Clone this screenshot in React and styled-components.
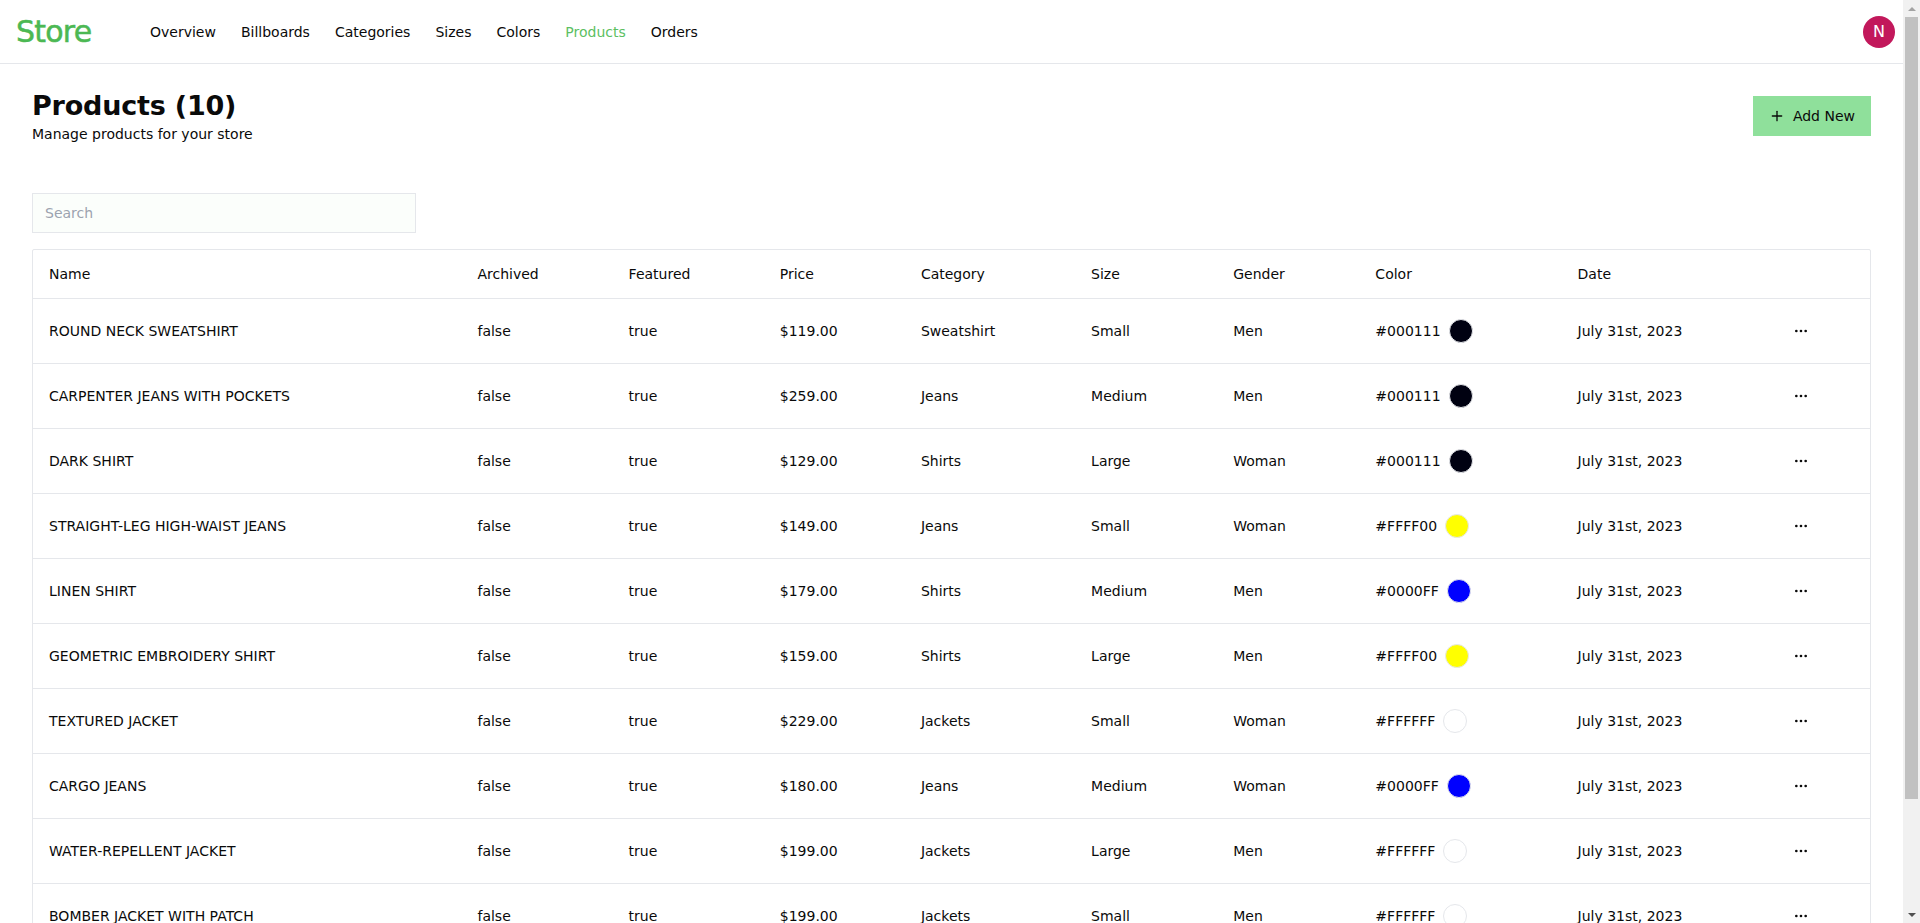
import React, { useEffect, useRef, useState } from "react";
import styled, { createGlobalStyle } from "styled-components";
import { Plus, Ellipsis } from "lucide-react";

const GlobalStyle = createGlobalStyle`
  html, body {
    margin: 0;
    height: 100%;
    overflow: hidden;
  }
  body {
    background: #ffffff;
    color: #0a0a0a;
    font-family: "DejaVu Sans", "Liberation Sans", sans-serif;
  }
  * { box-sizing: border-box; }
`;

const products = [
  { name: "ROUND NECK SWEATSHIRT", price: "$119.00", category: "Sweatshirt", size: "Small", gender: "Men", color: "#000111" },
  { name: "CARPENTER JEANS WITH POCKETS", price: "$259.00", category: "Jeans", size: "Medium", gender: "Men", color: "#000111" },
  { name: "DARK SHIRT", price: "$129.00", category: "Shirts", size: "Large", gender: "Woman", color: "#000111" },
  { name: "STRAIGHT-LEG HIGH-WAIST JEANS", price: "$149.00", category: "Jeans", size: "Small", gender: "Woman", color: "#FFFF00" },
  { name: "LINEN SHIRT", price: "$179.00", category: "Shirts", size: "Medium", gender: "Men", color: "#0000FF" },
  { name: "GEOMETRIC EMBROIDERY SHIRT", price: "$159.00", category: "Shirts", size: "Large", gender: "Men", color: "#FFFF00" },
  { name: "TEXTURED JACKET", price: "$229.00", category: "Jackets", size: "Small", gender: "Woman", color: "#FFFFFF" },
  { name: "CARGO JEANS", price: "$180.00", category: "Jeans", size: "Medium", gender: "Woman", color: "#0000FF" },
  { name: "WATER-REPELLENT JACKET", price: "$199.00", category: "Jackets", size: "Large", gender: "Men", color: "#FFFFFF" },
  { name: "BOMBER JACKET WITH PATCH", price: "$199.00", category: "Jackets", size: "Small", gender: "Men", color: "#FFFFFF" },
];

const links = ["Overview", "Billboards", "Categories", "Sizes", "Colors", "Products", "Orders"];

const columns = [
  { label: "Name", width: 428 },
  { label: "Archived", width: 151 },
  { label: "Featured", width: 151 },
  { label: "Price", width: 141 },
  { label: "Category", width: 170 },
  { label: "Size", width: 142 },
  { label: "Gender", width: 142 },
  { label: "Color", width: 202 },
  { label: "Date", width: 207 },
  { label: "", width: 101 },
];

const Shell = styled.div`
  display: flex;
  height: 100vh;
`;

const Viewport = styled.div`
  flex: 1;
  min-width: 0;
  overflow-y: auto;
  scrollbar-width: none;
  &::-webkit-scrollbar { display: none; }
`;

// drawn scrollbar, the browser's own one is hidden in the capture
const ScrollBar = styled.div`
  width: 17px;
  background: #f1f1f1;
  display: flex;
  flex-direction: column;
`;

const Arrow = styled.div`
  height: 17px;
  display: flex;
  align-items: center;
  justify-content: center;
  &::after {
    content: "";
    border-left: 4px solid transparent;
    border-right: 4px solid transparent;
    ${(p) => (p.$down ? "border-top: 4px solid #505050;" : "border-bottom: 4px solid #a3a3a3;")}
  }
`;

const Track = styled.div`
  flex: 1;
  padding: 0 2px;
`;

const Thumb = styled.div`
  background: #c1c1c1;
  height: 100%;
`;

const NavBar = styled.header`
  height: 64px;
  border-bottom: 1px solid #e5e7eb;
  display: flex;
  align-items: center;
  padding: 0 8px 0 16px;
`;

const Logo = styled.div`
  width: 134px;
  font-size: 30px;
  font-weight: 400;
  color: #4cb853;
  letter-spacing: -0.8px;
  -webkit-text-stroke: 0.5px #4cb853;
`;

const NavLinks = styled.nav`
  display: flex;
  align-items: center;
  gap: 25px;
`;

const NavLink = styled.a`
  font-size: 14px;
  font-weight: 500;
  color: ${(p) => (p.$active ? "#5cbf62" : "#0a0a0a")};
  text-decoration: none;
  cursor: pointer;
`;

const NavRight = styled.div`
  margin-left: auto;
  display: flex;
  align-items: center;
`;

const Avatar = styled.div`
  width: 32px;
  height: 32px;
  border-radius: 50%;
  background: #c2185b;
  color: #ffffff;
  display: flex;
  align-items: center;
  justify-content: center;
  font-size: 16px;
`;

const Main = styled.main`
  padding: 24px 32px 32px;
`;

const HeaderRow = styled.div`
  display: flex;
  align-items: center;
  justify-content: space-between;
  margin-bottom: 33px;
`;

const Title = styled.h2`
  margin: 0;
  font-size: 27px;
  line-height: 36px;
  font-weight: 700;
  letter-spacing: -0.2px;
`;

const Subtitle = styled.p`
  margin: 0;
  font-size: 14px;
  line-height: 20px;
`;

const AddButton = styled.button`
  height: 40px;
  padding: 0 16px;
  display: inline-flex;
  align-items: center;
  gap: 8px;
  border: none;
  background: #8fe09b;
  color: #0a0a0a;
  font-family: inherit;
  font-size: 14px;
  font-weight: 500;
  cursor: pointer;
`;

const Toolbar = styled.div`
  display: flex;
  align-items: center;
  padding: 16px 0;
`;

const SearchInput = styled.input`
  width: 384px;
  height: 40px;
  padding: 0 12px;
  border: 1px solid #e5e7eb;
  background: #fbfefb;
  font-family: inherit;
  font-size: 14px;
  color: #0a0a0a;
  outline: none;
  &::placeholder {
    color: #9ca3af;
  }
`;

const TableFrame = styled.div`
  border: 1px solid #e5e7eb;
  border-radius: 2px;
`;

const Table = styled.table`
  width: 100%;
  border-collapse: collapse;
  table-layout: fixed;
  font-size: 14px;
`;

const Row = styled.tr`
  border-bottom: 1px solid #e5e7eb;
  tbody &:last-child {
    border-bottom: none;
  }
`;

const Th = styled.th`
  height: 48px;
  padding: 0 16px;
  text-align: left;
  font-weight: 500;
  color: #0a0a0a;
`;

const Td = styled.td`
  padding: 16px;
  line-height: 20px;
  vertical-align: middle;
  white-space: nowrap;
`;

const ColorCell = styled.div`
  display: flex;
  align-items: center;
  gap: 8px;
`;

const Swatch = styled.span`
  width: 24px;
  height: 24px;
  border-radius: 50%;
  border: 1px solid #e5e7eb;
  background: ${(p) => p.$color};
`;

const IconButton = styled.button`
  width: 32px;
  height: 32px;
  display: flex;
  align-items: center;
  justify-content: center;
  border: none;
  background: transparent;
  color: #0a0a0a;
  padding: 0;
  cursor: pointer;
`;

const Pagination = styled.div`
  display: flex;
  justify-content: flex-end;
  gap: 8px;
  padding: 16px 0;
`;

const PageButton = styled.button`
  height: 36px;
  padding: 0 12px;
  border: 1px solid #e5e7eb;
  background: #ffffff;
  font-family: inherit;
  font-size: 14px;
  color: #0a0a0a;
  opacity: ${(p) => (p.disabled ? 0.5 : 1)};
`;

export default function App() {
  const [query, setQuery] = useState("");
  const [thumb, setThumb] = useState({ top: 0, size: 1 });
  const viewRef = useRef(null);
  const rows = products.filter((p) => p.name.toLowerCase().includes(query.toLowerCase()));

  const measure = () => {
    const el = viewRef.current;
    if (!el) return;
    setThumb({
      top: el.scrollTop / el.scrollHeight,
      size: el.clientHeight / el.scrollHeight,
    });
  };

  useEffect(() => {
    measure();
    window.addEventListener("resize", measure);
    return () => window.removeEventListener("resize", measure);
  }, [rows.length]);

  return (
    <Shell>
      <GlobalStyle />
      <Viewport ref={viewRef} onScroll={measure}>
        <NavBar>
          <Logo>Store</Logo>
          <NavLinks>
            {links.map((l) => (
              <NavLink key={l} $active={l === "Products"}>{l}</NavLink>
            ))}
          </NavLinks>
          <NavRight>
            <Avatar>N</Avatar>
          </NavRight>
        </NavBar>
        <Main>
          <HeaderRow>
            <div>
              <Title>Products (10)</Title>
              <Subtitle>Manage products for your store</Subtitle>
            </div>
            <AddButton>
              <Plus size={16} strokeWidth={2} />
              Add New
            </AddButton>
          </HeaderRow>
          <Toolbar>
            <SearchInput placeholder="Search" value={query} onChange={(e) => setQuery(e.target.value)} />
          </Toolbar>
          <TableFrame>
            <Table>
              <colgroup>
                {columns.map((c, i) => (
                  <col key={i} style={{ width: c.width }} />
                ))}
              </colgroup>
              <thead>
                <Row>
                  {columns.map((c, i) => (
                    <Th key={i}>{c.label}</Th>
                  ))}
                </Row>
              </thead>
              <tbody>
                {rows.map((p) => (
                  <Row key={p.name}>
                    <Td>{p.name}</Td>
                    <Td>false</Td>
                    <Td>true</Td>
                    <Td>{p.price}</Td>
                    <Td>{p.category}</Td>
                    <Td>{p.size}</Td>
                    <Td>{p.gender}</Td>
                    <Td>
                      <ColorCell>
                        {p.color}
                        <Swatch $color={p.color} />
                      </ColorCell>
                    </Td>
                    <Td>July 31st, 2023</Td>
                    <Td>
                      <IconButton>
                        <Ellipsis size={16} />
                      </IconButton>
                    </Td>
                  </Row>
                ))}
              </tbody>
            </Table>
          </TableFrame>
          <Pagination>
            <PageButton disabled>Previous</PageButton>
            <PageButton disabled>Next</PageButton>
          </Pagination>
        </Main>
      </Viewport>
      <ScrollBar>
        <Arrow />
        <Track>
          <Thumb style={{ marginTop: `${thumb.top * 100}%`, height: `${Math.min(thumb.size, 1) * 100}%` }} />
        </Track>
        <Arrow $down />
      </ScrollBar>
    </Shell>
  );
}
